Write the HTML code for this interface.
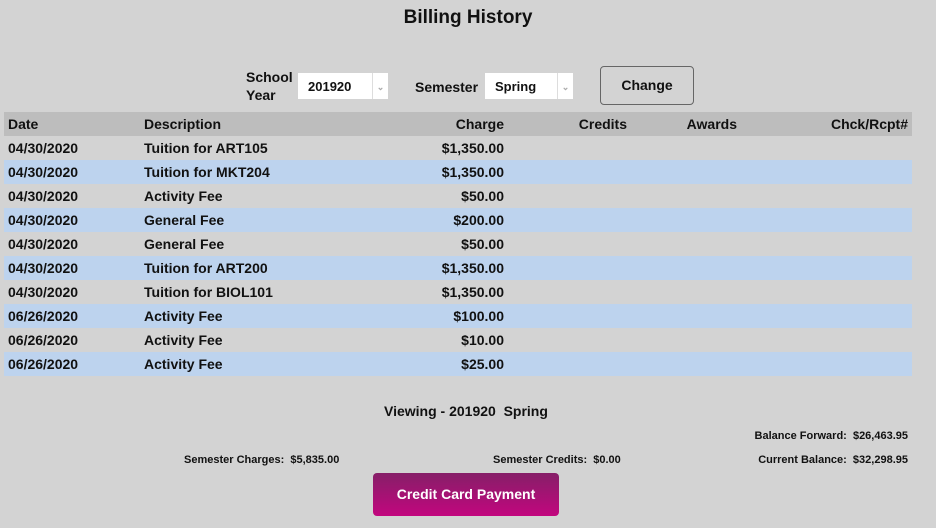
<!DOCTYPE html>
<html><head><style>
body{margin:0;width:936px;height:528px;background:#d3d3d3;font-family:"Liberation Sans",sans-serif;color:#111;position:relative;overflow:hidden}
.a{position:absolute;white-space:nowrap}
h1{position:absolute;top:7px;left:0;width:936px;text-align:center;font-size:19px;margin:0;font-weight:bold}
.lab{font-size:14px;font-weight:bold;line-height:18px}
.sel{position:absolute;background:#fff;height:26px;font-size:13px;font-weight:bold;line-height:28px;padding-left:10px;box-sizing:border-box}
.sel i{position:absolute;right:0;top:0;width:15px;height:26px;border-left:1px solid #ddd;color:#aaa;font-style:normal;font-size:9px;text-align:center}
.btn{position:absolute;left:600px;top:66px;width:92px;height:37px;border:1px solid #666;border-radius:4px;text-align:center;line-height:36px;font-size:14px;font-weight:bold}
table{position:absolute;left:4px;top:112px;width:908px;border-collapse:collapse;font-size:14px;font-weight:bold}
td,th{height:24px;padding:0 4px;line-height:24px}
th{background:#bdbdbd;text-align:left}
tr.b td{background:#bdd3ee}
.r{text-align:right}
.s{font-size:11px;font-weight:bold}
.pay{position:absolute;left:373px;top:473px;width:186px;height:43px;border-radius:4px;background:linear-gradient(#861f68,#c2067e);color:#fff;font-weight:bold;font-size:14px;text-align:center;line-height:43px}
</style></head><body>
<h1>Billing History</h1>
<div class="a lab" style="left:246px;top:68px">School<br>Year</div>
<div class="sel" style="left:298px;top:73px;width:90px">201920<i>⌄</i></div>
<div class="a lab" style="left:415px;top:78px">Semester</div>
<div class="sel" style="left:485px;top:73px;width:88px">Spring<i>⌄</i></div>
<div class="btn">Change</div>
<table>
<tr><th style="width:128px">Date</th><th style="width:230px">Description</th><th class="r" style="width:122px">Charge</th><th class="r" style="width:115px">Credits</th><th class="r" style="width:102px">Awards</th><th class="r">Chck/Rcpt#</th></tr>
<tr><td>04/30/2020</td><td>Tuition for ART105</td><td class="r">$1,350.00</td><td></td><td></td><td></td></tr>
<tr class="b"><td>04/30/2020</td><td>Tuition for MKT204</td><td class="r">$1,350.00</td><td></td><td></td><td></td></tr>
<tr><td>04/30/2020</td><td>Activity Fee</td><td class="r">$50.00</td><td></td><td></td><td></td></tr>
<tr class="b"><td>04/30/2020</td><td>General Fee</td><td class="r">$200.00</td><td></td><td></td><td></td></tr>
<tr><td>04/30/2020</td><td>General Fee</td><td class="r">$50.00</td><td></td><td></td><td></td></tr>
<tr class="b"><td>04/30/2020</td><td>Tuition for ART200</td><td class="r">$1,350.00</td><td></td><td></td><td></td></tr>
<tr><td>04/30/2020</td><td>Tuition for BIOL101</td><td class="r">$1,350.00</td><td></td><td></td><td></td></tr>
<tr class="b"><td>06/26/2020</td><td>Activity Fee</td><td class="r">$100.00</td><td></td><td></td><td></td></tr>
<tr><td>06/26/2020</td><td>Activity Fee</td><td class="r">$10.00</td><td></td><td></td><td></td></tr>
<tr class="b"><td>06/26/2020</td><td>Activity Fee</td><td class="r">$25.00</td><td></td><td></td><td></td></tr>
</table>
<div class="a" style="left:384px;top:403px;font-size:14px;font-weight:bold">Viewing - 201920&nbsp; Spring</div>
<div class="a s" style="right:28px;top:430px">Balance Forward:&nbsp; $26,463.95</div>
<div class="a s" style="left:184px;top:454px">Semester Charges:&nbsp; $5,835.00</div>
<div class="a s" style="left:493px;top:454px">Semester Credits:&nbsp; $0.00</div>
<div class="a s" style="right:28px;top:454px">Current Balance:&nbsp; $32,298.95</div>
<div class="pay">Credit Card Payment</div>
</body></html>
